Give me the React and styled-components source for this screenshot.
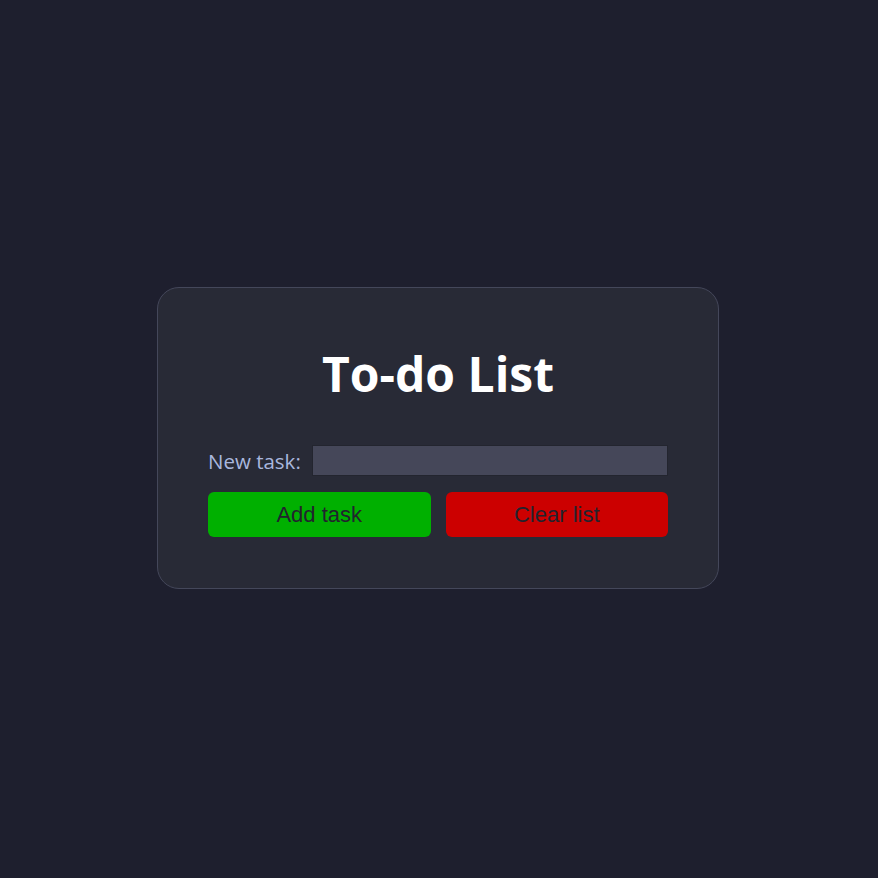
import React, { useState } from 'react';
import styled, { createGlobalStyle } from 'styled-components';

const GlobalStyle = createGlobalStyle`
  html, body {
    margin: 0;
    padding: 0;
    background-color: #1e1f2e;
  }
  #root {
    min-height: 100vh;
  }
`;

const Main = styled.div`
  display: flex;
  justify-content: center;
  align-items: center;
  min-height: 100vh;
  padding: 0 2px 2px 0;
  box-sizing: border-box;
  font-family: "Open Sans", "Noto Sans", sans-serif;
`;

const Card = styled.div`
  width: 460px;
  padding: 50px 50px 51px;
  background-color: #282a36;
  border: 1px solid #44475a;
  border-radius: 22px;
`;

const Title = styled.h1`
  margin: 0 0 36px;
  color: #ffffff;
  font-size: 48px;
  font-weight: 700;
  line-height: 71px;
  text-align: center;
`;

const Row = styled.div`
  display: flex;
  align-items: center;
  gap: 11px;
  margin-bottom: 16px;
`;

const Label = styled.label`
  color: #a9b7de;
  font-size: 20.5px;
`;

const Input = styled.input`
  flex: 1;
  height: 31px;
  box-sizing: border-box;
  background-color: #454759;
  border: 1px solid #23252f;
  color: #f8f8f2;
  font-size: 18px;
  padding: 0 6px;
  &:focus {
    outline: none;
  }
`;

const Buttons = styled.div`
  display: grid;
  grid-template-columns: 1fr 1fr;
  gap: 15px;
`;

const Button = styled.button`
  height: 45px;
  border: none;
  border-radius: 6px;
  background-color: ${props => props.danger ? '#cc0000' : '#00b000'};
  color: #22232e;
  font-family: "Liberation Sans", Arial, sans-serif;
  font-size: 22px;
  cursor: pointer;
`;

export default function App() {
  const [task, setTask] = useState('');
  const [tasks, setTasks] = useState([]);

  const addTask = () => {
    if (!task.trim()) return;
    setTasks([...tasks, task]);
    setTask('');
  };

  return (
    <>
      <GlobalStyle />
      <Main>
        <Card>
          <Title>To-do List</Title>
          <Row>
            <Label htmlFor="task">New task:</Label>
            <Input id="task" value={task} onChange={e => setTask(e.target.value)} />
          </Row>
          <Buttons>
            <Button onClick={addTask}>Add task</Button>
            <Button danger onClick={() => setTasks([])}>Clear list</Button>
          </Buttons>
        </Card>
      </Main>
    </>
  );
}
